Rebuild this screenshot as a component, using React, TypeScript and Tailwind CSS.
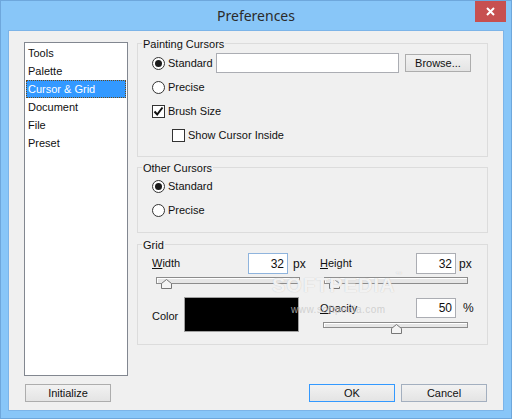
import React from 'react';

const Radio: React.FC<{ checked?: boolean; label: string }> = ({ checked, label }) => (
  <div className="flex h-[24px] items-center">
    <span className="flex h-[13px] w-[13px] items-center justify-center rounded-full border border-[#333] bg-white">
      {checked && <span className="h-[7px] w-[7px] rounded-full bg-[#1b1b1b]" />}
    </span>
    <span className="ml-[3px]">{label}</span>
  </div>
);

const Check: React.FC<{ checked?: boolean; label: string; className?: string }> = ({ checked, label, className = '' }) => (
  <div className={`flex h-[24px] items-center ${className}`}>
    <span className="flex h-[13px] w-[13px] items-center justify-center border border-[#333] bg-white">
      {checked && (
        <svg width="11" height="11" viewBox="0 0 11 11">
          <path d="M1.5 5.5 L4.2 8.5 L9.5 1.5" fill="none" stroke="#111" strokeWidth="2" />
        </svg>
      )}
    </span>
    <span className="ml-[3px]">{label}</span>
  </div>
);

// trackbar with a pentagon thumb
const Slider: React.FC<{ className: string; thumb: string }> = ({ className, thumb }) => (
  <div className={`relative border border-[#8c8c8c] bg-[#e6e6e6] shadow-[inset_1px_1px_0_#ffffff] ${className}`}>
    <svg className={`absolute top-[1px] ${thumb}`} width="11" height="10" viewBox="0 0 11 10">
      <path d="M0.5 4.5 L5.5 0.5 L10.5 4.5 L10.5 9.5 L0.5 9.5 Z" fill="#f4f4f4" stroke="#777" />
    </svg>
  </div>
);

const Button: React.FC<{ label: string; className?: string }> = ({ label, className = '' }) => (
  <button
    className={`flex h-[18px] items-center justify-center border bg-linear-to-b from-[#f2f2f2] to-[#e4e4e4] text-[11px] text-[#111] ${className}`}
  >
    {label}
  </button>
);

const Group: React.FC<{ title: string; className: string; children: React.ReactNode }> = ({ title, className, children }) => (
  <div className={`relative border border-[#dcdcdc] ${className}`}>
    <span className="absolute -top-[7px] left-[4px] bg-[#f0f0f0] px-[1px] leading-[14px]">{title}</span>
    {children}
  </div>
);

const items = ['Tools', 'Palette', 'Cursor & Grid', 'Document', 'File', 'Preset'];

export default function App() {
  return (
    <div className="relative flex h-[419px] w-[512px] flex-col border border-[#6ea7dc] bg-[#88c6f8] font-['Liberation_Sans',Arial,sans-serif] text-[11px] text-[#101010]">
      {/* Title bar */}
      <div className="relative flex h-[29px] items-center justify-center">
        <span className="font-['Noto_Sans',sans-serif] text-[14px] text-[#2b2b2b]">Preferences</span>
        <div className="absolute right-[5px] top-0 flex h-[21px] w-[31px] items-center justify-center bg-[#c75050]">
          <svg width="9" height="9" viewBox="0 0 9 9">
            <path d="M1 1 L8 8 M8 1 L1 8" stroke="#fff" strokeWidth="2" />
          </svg>
        </div>
      </div>

      {/* Client area */}
      <div className="mx-[7px] flex h-[381px] flex-col border border-[#7cb4e8] bg-[#f0f0f0]">
        <div className="flex pl-[15px] pt-[11px]">
          {/* Category list */}
          <div className="h-[334px] w-[104px] border border-[#828790] bg-white p-[1px]">
            {items.map((it) =>
              it === 'Cursor & Grid' ? (
                <div key={it} className="flex h-[18px] items-center border border-dotted border-[#6b4a1a] bg-[#3399ff] pl-[1px] text-white">
                  {it}
                </div>
              ) : (
                <div key={it} className="flex h-[18px] items-center pl-[2px]">
                  {it}
                </div>
              )
            )}
          </div>

          {/* Settings */}
          <div className="ml-[9px] mt-[1px] w-[351px]">
            <Group title="Painting Cursors" className="h-[114px] pl-[14px] pt-[7px]">
              <div className="flex h-[24px] items-center">
                <span className="flex h-[13px] w-[13px] items-center justify-center rounded-full border border-[#333] bg-white">
                  <span className="h-[7px] w-[7px] rounded-full bg-[#1b1b1b]" />
                </span>
                <span className="ml-[3px] w-[48px]">Standard</span>
                <div className="h-[20px] w-[183px] border border-[#abadb3] bg-white" />
                <Button label="Browse..." className="ml-[6px] w-[66px] border-[#adadad]" />
              </div>
              <Radio label="Precise" />
              <Check checked label="Brush Size" />
              <Check label="Show Cursor Inside" className="ml-[20px]" />
            </Group>

            <Group title="Other Cursors" className="mt-[10px] h-[66px] pl-[14px] pt-[6px]">
              <Radio checked label="Standard" />
              <Radio label="Precise" />
            </Group>

            <Group title="Grid" className="mt-[11px] h-[101px]">
              <div className="flex pl-[14px] pt-[8px]">
                <div className="flex w-[168px] flex-col">
                  <div className="flex h-[21px] items-center">
                    <span className="w-[96px]"><span className="underline">W</span>idth</span>
                    <div className="flex h-[21px] w-[40px] items-center justify-end border border-[#8fb4dd] bg-white pr-[3px] text-[12px]">32</div>
                    <span className="ml-[5px] text-[12px]">px</span>
                  </div>
                  <Slider className="ml-[4px] mt-[3px] h-[7px] w-[144px]" thumb="left-[4px]" />
                  <div className="mt-[13px] flex items-center">
                    <span className="w-[32px] pt-[3px]">Color</span>
                    <div className="h-[35px] w-[115px] border border-[#a0a0a0] bg-black" />
                  </div>
                </div>
                <div className="flex flex-col">
                  <div className="flex h-[21px] items-center">
                    <span className="w-[96px]"><span className="underline">H</span>eight</span>
                    <div className="flex h-[21px] w-[40px] items-center justify-end border border-[#abadb3] bg-white pr-[3px] text-[12px]">32</div>
                    <span className="ml-[3px] text-[12px]">px</span>
                  </div>
                  <Slider className="ml-[4px] mt-[3px] h-[7px] w-[144px]" thumb="left-[4px]" />
                  <div className="mt-[14px] flex h-[20px] items-center">
                    <span className="w-[96px]"><span className="underline">O</span>pacity</span>
                    <div className="flex h-[20px] w-[40px] items-center justify-end border border-[#abadb3] bg-white pr-[3px] text-[12px]">50</div>
                    <span className="ml-[7px] text-[12px]">%</span>
                  </div>
                  <Slider className="ml-[3px] mt-[4px] h-[6px] w-[145px]" thumb="left-[67px]" />
                </div>
              </div>
            </Group>
          </div>
        </div>

        {/* Bottom buttons */}
        <div className="mt-[8px] flex pl-[16px]">
          <Button label="Initialize" className="w-[86px] border-[#adadad]" />
          <Button label="OK" className="ml-[198px] w-[86px] border-[#3399ff]" />
          <Button label="Cancel" className="ml-[6px] w-[86px] border-[#a3afbf]" />
        </div>
      </div>

      {/* Watermark */}
      <div className="pointer-events-none absolute left-[271px] top-[269px] text-[20px] font-bold tracking-[1px] text-white/80 [text-shadow:0_0_1px_#b8b8b8]">
        SOFTPEDIA<span className="align-top text-[7px]">™</span>
      </div>
      <div className="pointer-events-none absolute left-[290px] top-[301px] text-[10px] tracking-[0.5px] text-[#c8c8c8]/80">
        www.softpedia.com
      </div>
    </div>
  );
}
